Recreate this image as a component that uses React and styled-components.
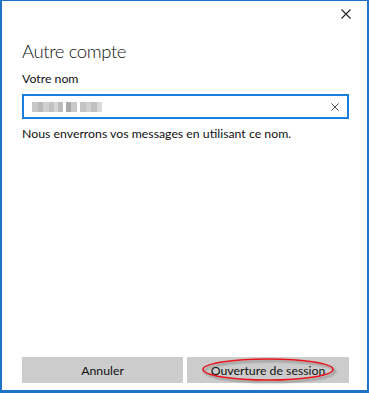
import React from 'react'
import styled, { createGlobalStyle } from 'styled-components'

const GlobalStyle = createGlobalStyle`
  html, body {
    margin: 0;
    padding: 0;
    background: #ffffff;
  }
  body {
    font-family: Lato, "Noto Sans", sans-serif;
    color: #000;
  }
`

const Window = styled.div`
  position: relative;
  box-sizing: border-box;
  width: 369px;
  height: 393px;
  background: #ffffff;
  border: 2px solid #1f73c6;
  border-top-width: 1px;
  border-bottom-width: 3px;
  display: flex;
  flex-direction: column;
`

const TitleBar = styled.div`
  height: 30px;
  display: flex;
  justify-content: flex-end;
  align-items: flex-start;
`

const CloseButton = styled.button`
  width: 46px;
  height: 26px;
  border: 0;
  background: transparent;
  padding: 0;
  margin-right: -2px;
  display: flex;
  align-items: center;
  justify-content: center;
  color: #222;
`

const Content = styled.div`
  padding: 0 18px 0 20px;
  display: flex;
  flex-direction: column;
`

const Title = styled.h1`
  margin: 8px 0 0;
  font-family: Lato, "Noto Sans", sans-serif;
  font-weight: 300;
  font-size: 18.5px;
  letter-spacing: -0.4px;
  line-height: 24px;
  color: #111;
`

const Label = styled.label`
  margin-top: 7px;
  font-size: 12.3px;
  line-height: 18px;
  color: #111;
`

const Field = styled.div`
  margin-top: 6px;
  box-sizing: border-box;
  height: 25px;
  width: 327px;
  border: 2px solid #1a7fdb;
  display: flex;
  align-items: center;
  padding: 0 8px 0 8px;
`

const Masked = styled.div`
  display: flex;
  flex: 1;
  height: 10px;
  margin-top: 1px;
`

const Pixel = styled.span`
  width: ${p => p.w || 5}px;
  height: 10px;
  background: ${p => p.shade};
`

const ClearButton = styled.span`
  display: flex;
  align-items: center;
  color: #444;
`

const Help = styled.p`
  margin: 6px 0 0;
  font-size: 12.3px;
  line-height: 18px;
  color: #111;
`

const Footer = styled.div`
  margin-top: auto;
  padding: 0 18px 7px 20px;
  display: grid;
  grid-template-columns: 161px 162px;
  column-gap: 4px;
`

const Button = styled.button`
  position: relative;
  height: 26px;
  border: 0;
  padding: 0;
  background: #cccccc;
  font-family: Lato, "Noto Sans", sans-serif;
  font-size: 12.3px;
  color: #111;
  display: flex;
  align-items: center;
  justify-content: center;
`

const Highlight = styled.svg`
  position: absolute;
  left: 15px;
  top: 1px;
  overflow: visible;
  pointer-events: none;
`

const shades = [
  ['#c8c8c8', 6], ['#b9b9b9', 5], ['#cfcfcf', 6], ['#c2c2c2', 5], ['#d6d6d6', 4],
  ['#bdbdbd', 5], ['#ffffff', 3], ['#a9a9a9', 5], ['#c9c9c9', 6], ['#ffffff', 3],
  ['#c4c4c4', 6], ['#d0d0d0', 5], ['#c0c0c0', 6], ['#dadada', 5],
]

const Cross = ({ size, stroke = 1.1 }) => (
  <svg width={size} height={size} viewBox="0 0 10 10">
    <path d="M0.5 0.5 L9.5 9.5 M9.5 0.5 L0.5 9.5" stroke="currentColor" strokeWidth={stroke} fill="none" />
  </svg>
)

const App = () => (
  <>
    <GlobalStyle />
    <Window>
      <TitleBar>
        <CloseButton aria-label="Fermer">
          <Cross size={10} />
        </CloseButton>
      </TitleBar>
      <Content>
        <Title>Autre compte</Title>
        <Label>Votre nom</Label>
        <Field>
          <Masked>
            {shades.map(([shade, w], i) => (
              <Pixel key={i} shade={shade} w={w} />
            ))}
          </Masked>
          <ClearButton>
            <Cross size={8} stroke={1.2} />
          </ClearButton>
        </Field>
        <Help>Nous enverrons vos messages en utilisant ce nom.</Help>
      </Content>
      <Footer>
        <Button>Annuler</Button>
        <Button>
          Ouverture de session
          <Highlight width="133" height="23" viewBox="0 0 133 23">
            <defs>
              <filter id="sh" x="-10%" y="-30%" width="130%" height="180%">
                <feDropShadow dx="2" dy="2" stdDeviation="1.2" floodColor="#555" floodOpacity="0.6" />
              </filter>
            </defs>
            <ellipse cx="66" cy="11.5" rx="65" ry="10.5" fill="none" stroke="#e8141c" strokeWidth="1.6" filter="url(#sh)" />
          </Highlight>
        </Button>
      </Footer>
    </Window>
  </>
)

export default App
